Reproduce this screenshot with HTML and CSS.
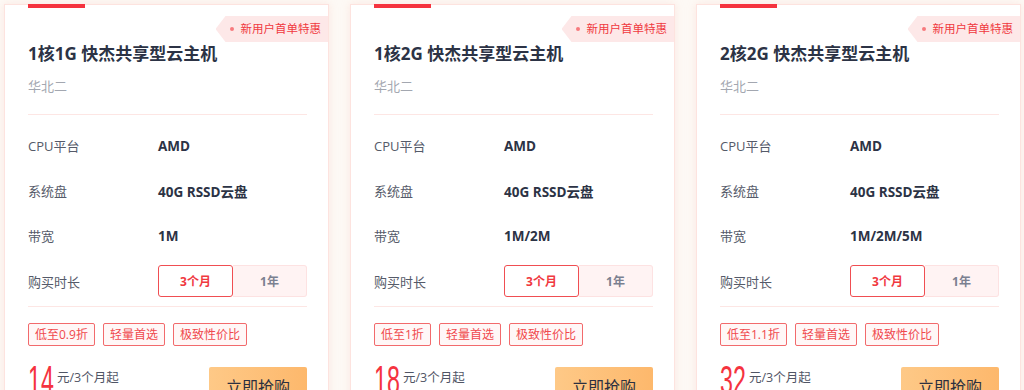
FILE: index.html
```html
<!DOCTYPE html>
<html lang="zh-CN">

<head>
	<meta charset="UTF-8">
	<meta name="viewport" content="width=device-width, initial-scale=1.0">
	<title>快杰共享型云主机</title>
	<link rel="stylesheet" href="styles.css">
</head>

<body>
	<main class="cards">
		<div class="card">
			<span class="top-bar"></span>
			<span class="badge"><i class="dot"></i>新用户首单特惠</span>
			<h2 class="title">1核1G 快杰共享型云主机</h2>
			<div class="region">华北二</div>
			<div class="line"></div>
			<div class="specs">
				<div class="row"><span class="label">CPU平台</span><span class="value">AMD</span></div>
				<div class="row"><span class="label">系统盘</span><span class="value">40G RSSD云盘</span></div>
				<div class="row"><span class="label">带宽</span><span class="value">1M</span></div>
				<div class="row row-toggle">
					<span class="label">购买时长</span>
					<div class="toggle">
						<span class="opt active">3个月</span>
						<span class="opt">1年</span>
					</div>
				</div>
			</div>
			<div class="line line-low"></div>
			<div class="tags">
				<span class="tag">低至0.9折</span>
				<span class="tag">轻量首选</span>
				<span class="tag">极致性价比</span>
			</div>
			<div class="buy">
				<div class="price"><span class="num">14</span><span class="unit">元/3个月起</span></div>
				<button class="btn">立即抢购</button>
			</div>
		</div>

		<div class="card">
			<span class="top-bar"></span>
			<span class="badge"><i class="dot"></i>新用户首单特惠</span>
			<h2 class="title">1核2G 快杰共享型云主机</h2>
			<div class="region">华北二</div>
			<div class="line"></div>
			<div class="specs">
				<div class="row"><span class="label">CPU平台</span><span class="value">AMD</span></div>
				<div class="row"><span class="label">系统盘</span><span class="value">40G RSSD云盘</span></div>
				<div class="row"><span class="label">带宽</span><span class="value">1M/2M</span></div>
				<div class="row row-toggle">
					<span class="label">购买时长</span>
					<div class="toggle">
						<span class="opt active">3个月</span>
						<span class="opt">1年</span>
					</div>
				</div>
			</div>
			<div class="line line-low"></div>
			<div class="tags">
				<span class="tag">低至1折</span>
				<span class="tag">轻量首选</span>
				<span class="tag">极致性价比</span>
			</div>
			<div class="buy">
				<div class="price"><span class="num">18</span><span class="unit">元/3个月起</span></div>
				<button class="btn">立即抢购</button>
			</div>
		</div>

		<div class="card">
			<span class="top-bar"></span>
			<span class="badge"><i class="dot"></i>新用户首单特惠</span>
			<h2 class="title">2核2G 快杰共享型云主机</h2>
			<div class="region">华北二</div>
			<div class="line"></div>
			<div class="specs">
				<div class="row"><span class="label">CPU平台</span><span class="value">AMD</span></div>
				<div class="row"><span class="label">系统盘</span><span class="value">40G RSSD云盘</span></div>
				<div class="row"><span class="label">带宽</span><span class="value">1M/2M/5M</span></div>
				<div class="row row-toggle">
					<span class="label">购买时长</span>
					<div class="toggle">
						<span class="opt active">3个月</span>
						<span class="opt">1年</span>
					</div>
				</div>
			</div>
			<div class="line line-low"></div>
			<div class="tags">
				<span class="tag">低至1.1折</span>
				<span class="tag">轻量首选</span>
				<span class="tag">极致性价比</span>
			</div>
			<div class="buy">
				<div class="price"><span class="num">32</span><span class="unit">元/3个月起</span></div>
				<button class="btn">立即抢购</button>
			</div>
		</div>
	</main>
</body>

</html>
```

FILE: styles.css
```css
* {
	box-sizing: border-box;
}

html,
body {
	height: 390px;
	overflow: hidden;
}

body {
	margin: 0;
	background: #fdf9f5;
	font-family: "Open Sans", "Noto Sans CJK SC", sans-serif;
	color: #2c3345;
}

.cards {
	display: grid;
	grid-template-columns: repeat(3, 325px);
	gap: 21px;
	padding: 4px 0 0 4px;
}

.card {
	position: relative;
	height: 420px;
	padding: 0 21px 0 23px;
	background: #fff;
	border: 1px solid #fde3df;
	box-shadow: 0 0 8px rgba(250, 200, 190, 0.35);
}

.top-bar {
	position: absolute;
	top: -1px;
	left: 23px;
	width: 57px;
	height: 4px;
	background: #f5333f;
}

.badge {
	position: absolute;
	top: 11px;
	right: 0;
	height: 26px;
	padding: 0 7px 0 25px;
	background: #fde8e8;
	color: #f0393f;
	font-size: 11.5px;
	line-height: 26px;
	clip-path: polygon(10px 0, 100% 0, 100% 100%, 10px 100%, 0 50%);
}

.dot {
	position: absolute;
	left: 14px;
	top: 11px;
	width: 4px;
	height: 4px;
	border-radius: 50%;
	background: #f77a7e;
}

.title {
	margin: 37px 0 0;
	font-size: 17px;
	line-height: 24px;
	font-weight: 700;
}

.region {
	margin-top: 10px;
	font-size: 13px;
	line-height: 20px;
	color: #a3a7b0;
}

.line {
	height: 1px;
	margin-top: 18px;
	background: #fde6e4;
}

.line-low {
	margin-top: 2px;
}

.specs {
	padding-top: 8px;
}

.row {
	display: flex;
	align-items: center;
	height: 45px;
	font-size: 13px;
}

.row-toggle {
	height: 46px;
}

.label {
	width: 130px;
	color: #555a69;
}

.value {
	font-size: 13.5px;
	font-weight: 700;
}

.toggle {
	flex: 1;
	display: flex;
	height: 32px;
	font-size: 12px;
	font-weight: 700;
}

.opt {
	flex: 1;
	display: flex;
	align-items: center;
	justify-content: center;
	background: #fff3f3;
	border: 1px solid #fde2e2;
	border-left: none;
	border-radius: 0 3px 3px 0;
	color: #7b8090;
}

.opt.active {
	flex: 0 0 75px;
	background: #fff;
	border: 1px solid #f04e52;
	border-radius: 3px;
	color: #f0393f;
}

.tags {
	display: flex;
	gap: 8px;
	margin-top: 16px;
}

.tag {
	height: 23px;
	padding: 0 6px;
	border: 1px solid #f26a6c;
	border-radius: 2px;
	background: #fff7f7;
	color: #f0494d;
	font-size: 12px;
	line-height: 21px;
}

.buy {
	display: flex;
	justify-content: space-between;
	align-items: flex-start;
	margin-top: 21px;
}

.price {
	display: flex;
	align-items: flex-start;
}

.num {
	display: inline-block;
	width: 26px;
	margin-top: -7px;
	color: #f5333f;
	font-family: "Liberation Sans", sans-serif;
	font-size: 40px;
	line-height: 40px;
	transform: scaleX(0.58);
	transform-origin: left top;
	white-space: nowrap;
}

.unit {
	margin: 3px 0 0 3px;
	font-size: 12.5px;
	line-height: 16px;
	color: #505565;
}

.btn {
	width: 98px;
	height: 38px;
	border: none;
	border-radius: 2px;
	background: linear-gradient(90deg, #fec987, #fdb86c);
	color: #2c3040;
	font-family: inherit;
	font-size: 16px;
}
```
